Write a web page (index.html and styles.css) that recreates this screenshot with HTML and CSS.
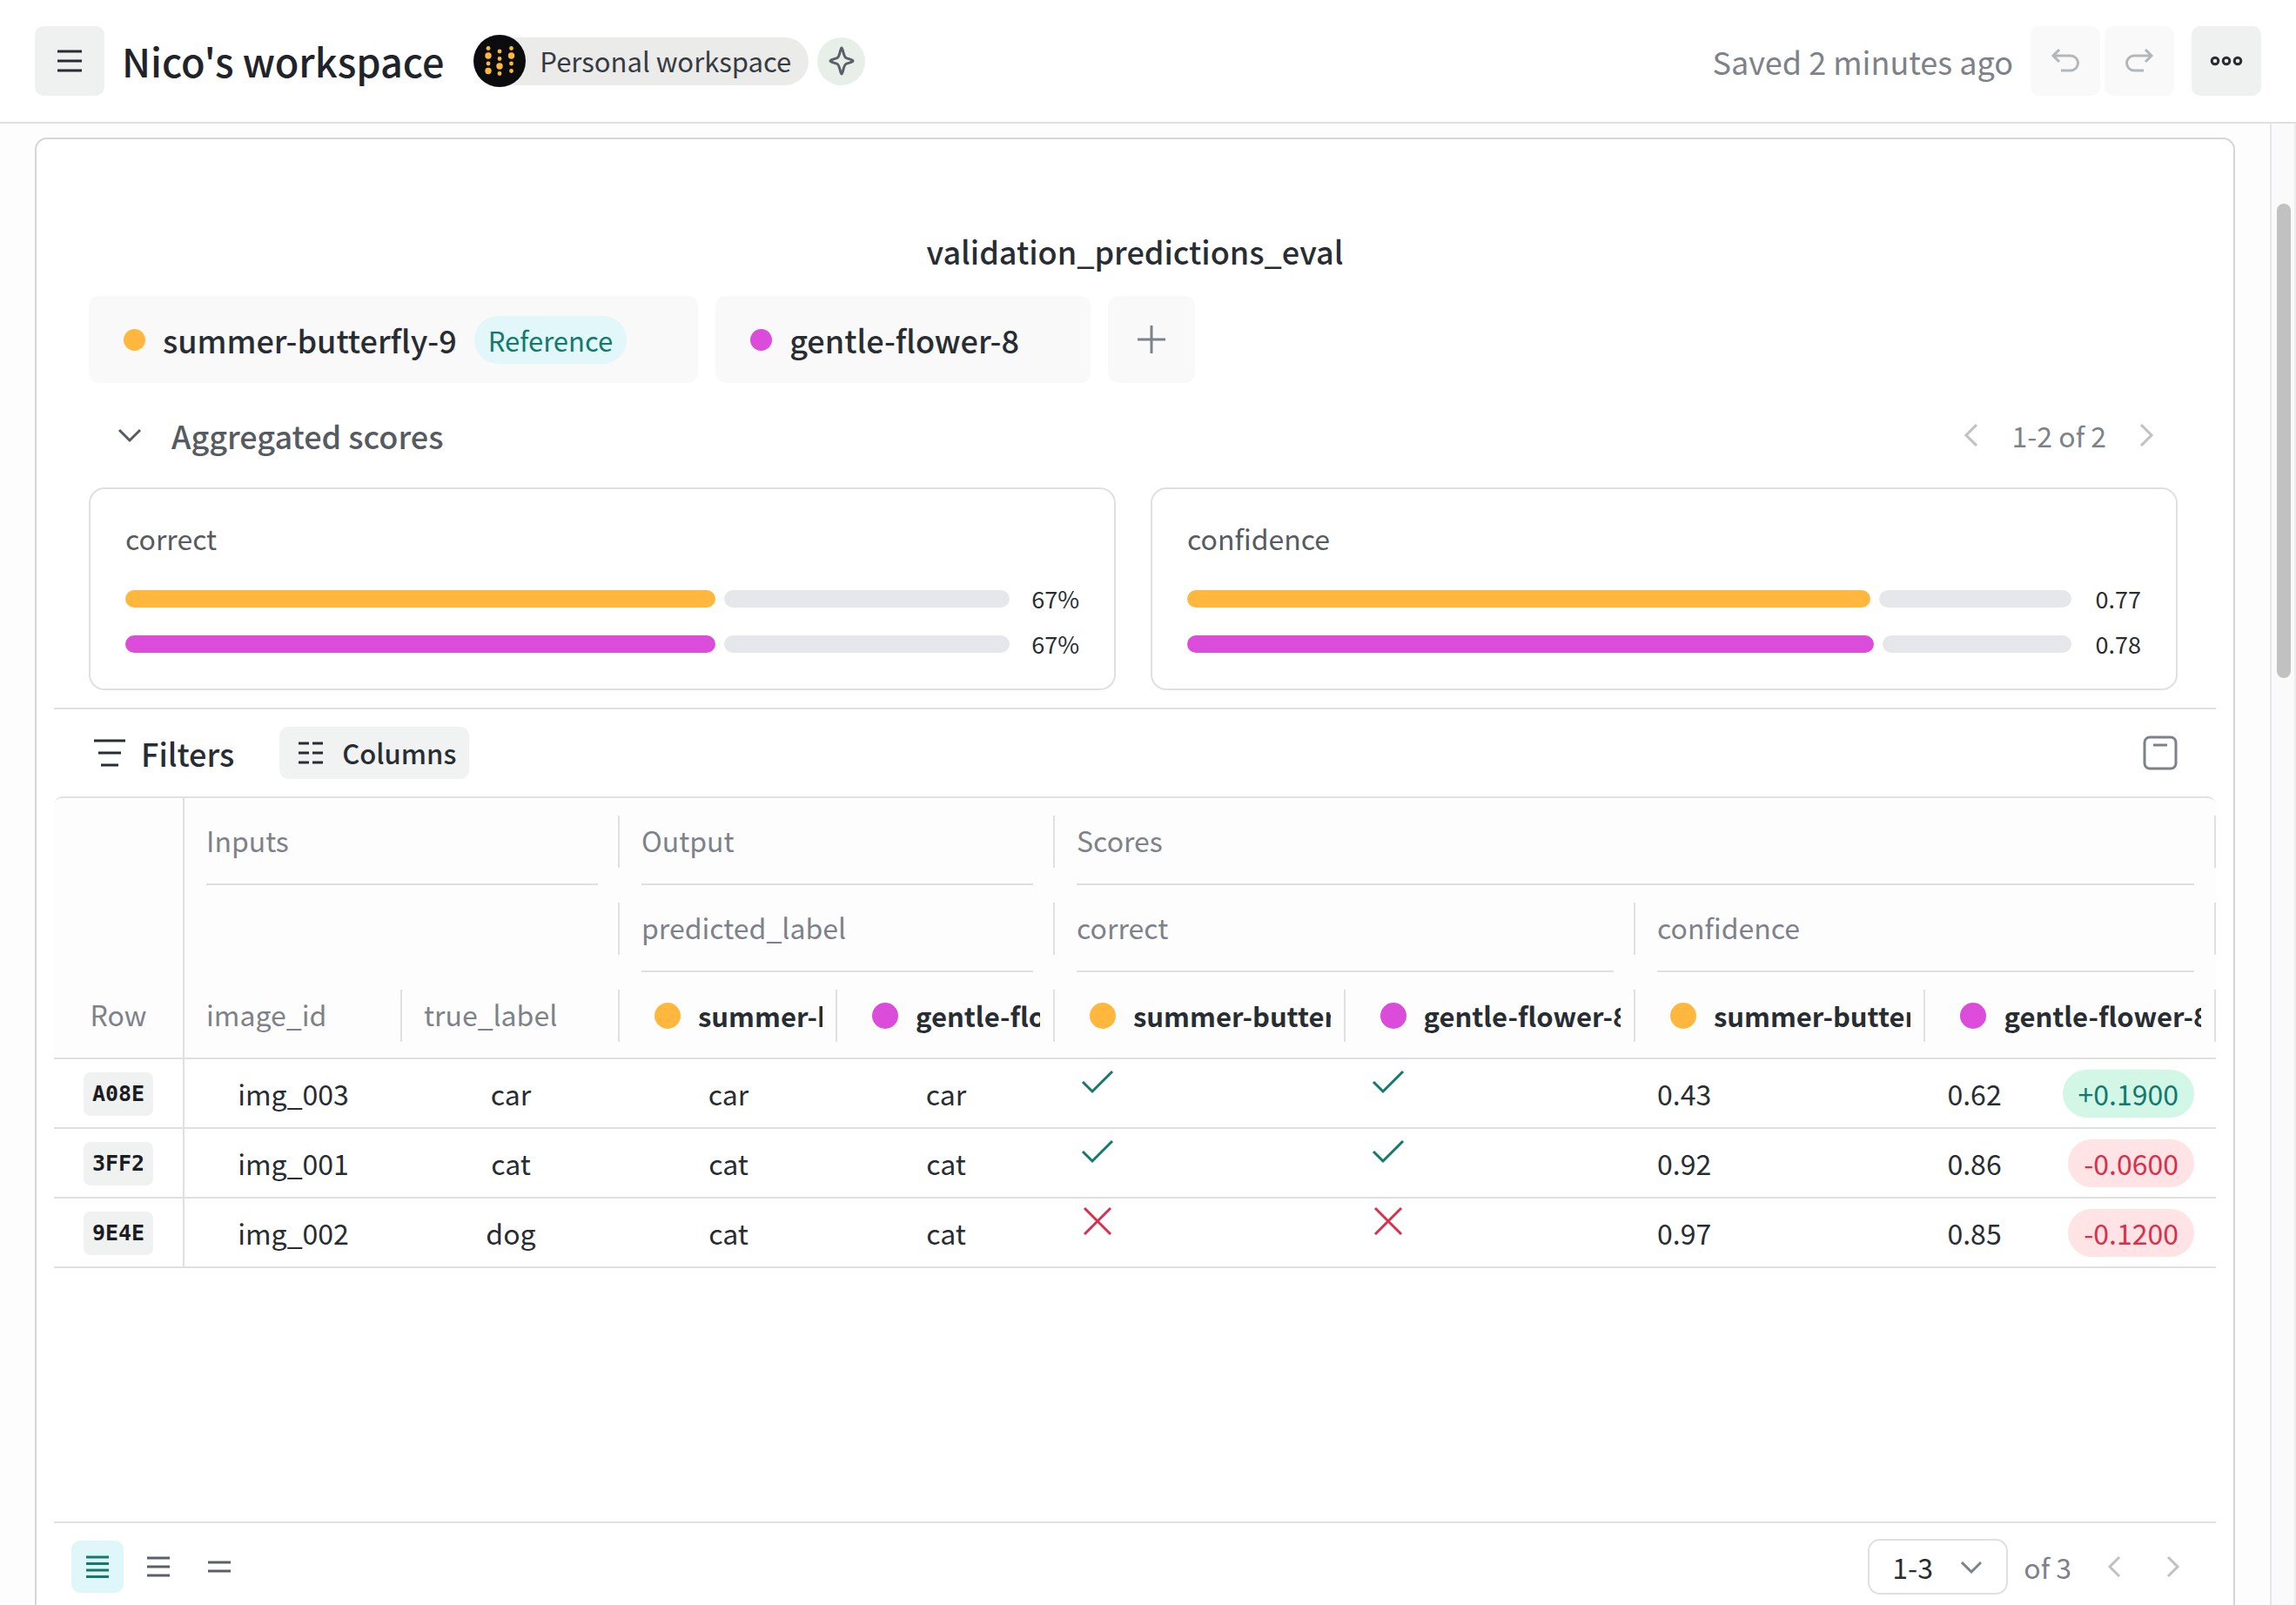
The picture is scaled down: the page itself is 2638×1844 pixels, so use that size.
FILE: index.html
```html
<!DOCTYPE html>
<html lang="en">

<head>
    <meta charset="UTF-8" />
    <meta name="viewport" content="width=device-width, initial-scale=1.0" />
    <title>Nico's workspace</title>
    <link rel="stylesheet" href="styles.css">
</head>

<body>
    <header class="topbar">
        <button class="icon-btn" aria-label="Menu">
            <svg width="40" height="40" viewBox="0 0 40 40"><path d="M6 9h28M6 20h28M6 31h28" /></svg>
        </button>
        <h1>Nico's workspace</h1>
        <a href="#" class="workspace-tag">
            <svg class="logo" width="60" height="60" viewBox="0 0 60 60">
                <circle cx="30" cy="30" r="30" fill="#0b0c0e" />
                <g fill="#ffb83d">
                    <circle cx="17" cy="15.500" r="2.400" /><circle cx="17" cy="24" r="3.700" /><circle cx="17" cy="33" r="2.400" /><circle cx="17" cy="41.500" r="3.700" />
                    <circle cx="30" cy="19" r="2.400" /><circle cx="30" cy="27.500" r="2.400" /><circle cx="30" cy="36" r="3.700" /><circle cx="30" cy="44.500" r="2.400" />
                    <circle cx="43.500" cy="15.500" r="2.400" /><circle cx="43.500" cy="24" r="3.700" /><circle cx="43.500" cy="33" r="2.400" /><circle cx="43.500" cy="41.500" r="2.400" />
                </g>
            </svg>
            <span>Personal workspace</span>
        </a>
        <button class="sparkle" aria-label="Assistant">
            <svg width="36" height="36" viewBox="0 0 36 36"><path d="M18 3C19.500 3 20 13 23 14.500C26 16 31 16.500 31 18C31 19.500 26 20 23 21.500C20 23 19.500 33 18 33C16.500 33 16 23 13 21.500C10 20 5 19.500 5 18C5 16.500 10 16 13 14.500C16 13 16.500 3 18 3Z" /></svg>
        </button>
        <span class="saved">Saved 2 minutes ago</span>
        <div class="history">
            <button class="icon-btn" aria-label="Undo" disabled>
                <svg width="40" height="40" viewBox="0 0 40 40"><path d="M13 7L6 14L13 21M6 14H26A8.500 8.500 0 0 1 26 31H15" /></svg>
            </button>
            <button class="icon-btn" aria-label="Redo" disabled>
                <svg width="40" height="40" viewBox="0 0 40 40"><path d="M27 7L34 14L27 21M34 14H14A8.500 8.500 0 0 0 14 31H25" /></svg>
            </button>
        </div>
        <button class="icon-btn" aria-label="More">
            <svg width="40" height="40" viewBox="0 0 40 40"><circle cx="7" cy="20" r="3.800" /><circle cx="20" cy="20" r="3.800" /><circle cx="33" cy="20" r="3.800" /></svg>
        </button>
    </header>

    <div class="page">
        <main class="workspace">
            <section class="panel">
                <h2>validation_predictions_eval</h2>

                <div class="runs">
                    <div class="run"><i class="dot gold"></i>summer-butterfly-9<span class="ref">Reference</span></div>
                    <div class="run"><i class="dot pink"></i>gentle-flower-8</div>
                    <button class="add" aria-label="Add run">
                        <svg width="40" height="40" viewBox="0 0 40 40"><path d="M20 4v32M4 20h32" /></svg>
                    </button>
                </div>

                <div class="scores-bar">
                    <button class="chev" aria-label="Collapse">
                        <svg width="40" height="40" viewBox="0 0 40 40"><path d="M8 14L20 26L32 14" /></svg>
                    </button>
                    <h3>Aggregated scores</h3>
                    <div class="pager">
                        <button class="chev" aria-label="Previous scores" disabled>
                            <svg width="40" height="40" viewBox="0 0 40 40"><path d="M26 8L14 20L26 32" /></svg>
                        </button>
                        <span>1-2 of 2</span>
                        <button class="chev" aria-label="Next scores" disabled>
                            <svg width="40" height="40" viewBox="0 0 40 40"><path d="M14 8L26 20L14 32" /></svg>
                        </button>
                    </div>
                </div>

                <div class="cards">
                    <div class="card">
                        <h4>correct</h4>
                        <div class="score">
                            <div class="bar"><div class="fill gold" style="width: 66.700%"></div><div class="rest"></div></div>
                            <span>67%</span>
                        </div>
                        <div class="score">
                            <div class="bar"><div class="fill pink" style="width: 66.700%"></div><div class="rest"></div></div>
                            <span>67%</span>
                        </div>
                    </div>
                    <div class="card">
                        <h4>confidence</h4>
                        <div class="score">
                            <div class="bar"><div class="fill gold" style="width: 77.300%"></div><div class="rest"></div></div>
                            <span>0.77</span>
                        </div>
                        <div class="score">
                            <div class="bar"><div class="fill pink" style="width: 77.700%"></div><div class="rest"></div></div>
                            <span>0.78</span>
                        </div>
                    </div>
                </div>

                <div class="toolbar">
                    <button class="filters">
                        <svg width="40" height="40" viewBox="0 0 40 40"><path d="M2 6h36M7 20h26M10 34h20" /></svg>
                        Filters
                    </button>
                    <button class="columns">
                        <svg width="32" height="32" viewBox="0 0 32 32"><path d="M2 5h12M18 5h12M2 16h12M18 16h12M2 27h12M18 27h12" /></svg>
                        Columns
                    </button>
                    <button class="row-size" aria-label="Row height">
                        <svg width="40" height="40" viewBox="0 0 40 40"><rect x="2" y="2" width="36" height="36" rx="6" /><path d="M12 11h16" /></svg>
                    </button>
                </div>

                <div class="table-wrap">
                    <table>
                        <colgroup>
                            <col class="c-row">
                            <col class="c-in" span="4">
                            <col span="4">
                        </colgroup>
                        <thead>
                            <tr>
                                <th rowspan="3" class="row-head">Row</th>
                                <th colspan="2" class="group"><div>Inputs</div></th>
                                <th colspan="2" class="group"><div>Output</div></th>
                                <th colspan="4" class="group"><div>Scores</div></th>
                            </tr>
                            <tr>
                                <th colspan="2"><div></div></th>
                                <th colspan="2" class="group"><div>predicted_label</div></th>
                                <th colspan="2" class="group"><div>correct</div></th>
                                <th colspan="2" class="group"><div>confidence</div></th>
                            </tr>
                            <tr>
                                <th><div>image_id</div></th>
                                <th><div>true_label</div></th>
                                <th><div class="run-head"><i class="dot gold"></i><span>summer-butterfly-9</span></div></th>
                                <th><div class="run-head"><i class="dot pink"></i><span>gentle-flower-8</span></div></th>
                                <th><div class="run-head"><i class="dot gold"></i><span>summer-butterfly-9</span></div></th>
                                <th><div class="run-head"><i class="dot pink"></i><span>gentle-flower-8</span></div></th>
                                <th><div class="run-head"><i class="dot gold"></i><span>summer-butterfly-9</span></div></th>
                                <th><div class="run-head"><i class="dot pink"></i><span>gentle-flower-8</span></div></th>
                            </tr>
                        </thead>
                        <tbody>
                            <tr>
                                <td class="id"><code>A08E</code></td>
                                <td>img_003</td>
                                <td>car</td>
                                <td>car</td>
                                <td>car</td>
                                <td class="mark"><svg class="yes" width="48" height="48" viewBox="0 0 48 48"><path d="M7 24L18 35L41 12" /></svg></td>
                                <td class="mark"><svg class="yes" width="48" height="48" viewBox="0 0 48 48"><path d="M7 24L18 35L41 12" /></svg></td>
                                <td class="num">0.43</td>
                                <td class="num"><div class="diff">0.62<span class="up">+0.1900</span></div></td>
                            </tr>
                            <tr>
                                <td class="id"><code>3FF2</code></td>
                                <td>img_001</td>
                                <td>cat</td>
                                <td>cat</td>
                                <td>cat</td>
                                <td class="mark"><svg class="yes" width="48" height="48" viewBox="0 0 48 48"><path d="M7 24L18 35L41 12" /></svg></td>
                                <td class="mark"><svg class="yes" width="48" height="48" viewBox="0 0 48 48"><path d="M7 24L18 35L41 12" /></svg></td>
                                <td class="num">0.92</td>
                                <td class="num"><div class="diff">0.86<span class="down">-0.0600</span></div></td>
                            </tr>
                            <tr>
                                <td class="id"><code>9E4E</code></td>
                                <td>img_002</td>
                                <td>dog</td>
                                <td>cat</td>
                                <td>cat</td>
                                <td class="mark"><svg class="no" width="48" height="48" viewBox="0 0 48 48"><path d="M9 9L39 39M39 9L9 39" /></svg></td>
                                <td class="mark"><svg class="no" width="48" height="48" viewBox="0 0 48 48"><path d="M9 9L39 39M39 9L9 39" /></svg></td>
                                <td class="num">0.97</td>
                                <td class="num"><div class="diff">0.85<span class="down">-0.1200</span></div></td>
                            </tr>
                        </tbody>
                    </table>
                </div>

                <footer class="table-footer">
                    <div class="density">
                        <button class="active" aria-label="Compact rows">
                            <svg width="40" height="40" viewBox="0 0 40 40"><path d="M7 9h26M7 16.500h26M7 24h26M7 31.500h26" /></svg>
                        </button>
                        <button aria-label="Medium rows">
                            <svg width="40" height="40" viewBox="0 0 40 40"><path d="M7 10h26M7 20h26M7 30h26" /></svg>
                        </button>
                        <button aria-label="Tall rows">
                            <svg width="40" height="40" viewBox="0 0 40 40"><path d="M7 15h26M7 25h26" /></svg>
                        </button>
                    </div>
                    <label class="range">
                        <select aria-label="Rows shown">
                            <option>1-3</option>
                        </select>
                        <svg width="40" height="40" viewBox="0 0 40 40"><path d="M9 15L20 26L31 15" /></svg>
                    </label>
                    <span class="total">of 3</span>
                    <button class="chev" aria-label="Previous page" disabled>
                        <svg width="40" height="40" viewBox="0 0 40 40"><path d="M25 9L14 20L25 31" /></svg>
                    </button>
                    <button class="chev" aria-label="Next page" disabled>
                        <svg width="40" height="40" viewBox="0 0 40 40"><path d="M15 9L26 20L15 31" /></svg>
                    </button>
                </footer>
            </section>
        </main>
        <div class="scrollbar"><div class="thumb"></div></div>
    </div>
</body>

</html>
```
FILE: styles.css
```css
* {
    box-sizing: border-box;
    margin: 0;
    padding: 0;
}

body {
    font-family: 'Noto Sans CJK SC', 'Noto Sans', sans-serif;
    font-size: 32px;
    line-height: 40px;
    color: #282d33;
    background: #fff;
    height: 100vh;
    display: flex;
    flex-direction: column;
    overflow: hidden;
}

button,
select {
    font: inherit;
    color: inherit;
    background: none;
    border: none;
    cursor: pointer;
}

svg {
    display: block;
    flex: none;
    fill: none;
    stroke: currentColor;
    stroke-width: 3;
}

h1,
h2,
h3 {
    font-weight: 500;
}

/* Top bar */
.topbar {
    flex: none;
    height: 142px;
    padding: 0 40px;
    display: flex;
    align-items: center;
    border-bottom: 2px solid #dfe0e1;
}

.icon-btn {
    width: 80px;
    height: 80px;
    display: flex;
    align-items: center;
    justify-content: center;
    border-radius: 10px;
    background: #eff0f0;
}

.icon-btn:disabled {
    background: #f9f9f9;
    color: #b4b7ba;
}

h1 {
    margin: 0 34px 0 20px;
    font-size: 45px;
    line-height: 60px;
    color: #1f242a;
}

.workspace-tag {
    display: flex;
    align-items: center;
    height: 55px;
    padding-right: 20px;
    gap: 16px;
    border-radius: 28px;
    background: #ebebea;
    color: #363b42;
    font-size: 31px;
    text-decoration: none;
}

.logo {
    stroke: none;
}

.sparkle {
    width: 55px;
    height: 55px;
    margin-left: 10px;
    display: flex;
    align-items: center;
    justify-content: center;
    border-radius: 50%;
    background: #e8efe9;
    color: #5b6068;
}

.saved {
    margin-left: auto;
    font-size: 36px;
    color: #7d828a;
}

.history {
    display: flex;
    gap: 5px;
    margin: 0 20px;
}

/* Page and scrollbar */
.page {
    flex: 1;
    min-height: 0;
    display: flex;
}

.workspace {
    flex: 1;
    min-width: 0;
    padding: 16px 40px 0;
    background: #fdfdfd;
    display: flex;
}

.scrollbar {
    width: 30px;
    padding: 92px 4px 0 6px;
    border-left: 2px solid #e6e6ea;
    border-right: 2px solid #ededed;
    background: #fafafa;
}

.thumb {
    width: 16px;
    height: 545px;
    border-radius: 8px;
    background: #c1c1c1;
}

/* Panel */
.panel {
    flex: 1;
    min-width: 0;
    padding: 108px 20px 0;
    border: 2px solid #d5d6db;
    border-bottom: none;
    border-radius: 14px 14px 0 0;
    background: #fff;
    display: flex;
    flex-direction: column;
}

h2 {
    font-size: 36px;
    line-height: 40px;
    text-align: center;
}

.runs {
    display: flex;
    gap: 20px;
    margin: 32px 40px 0;
}

.run {
    height: 100px;
    padding: 0 82px 0 40px;
    display: flex;
    align-items: center;
    gap: 20px;
    border-radius: 12px;
    background: #f9f9f9;
    font-size: 36px;
    font-weight: 500;
}

.dot {
    flex: none;
    width: 25px;
    height: 25px;
    border-radius: 50%;
}

.gold {
    background: #ffb83d;
}

.pink {
    background: #db4cdb;
}

.ref {
    padding: 0 16px;
    border-radius: 28px;
    font-size: 31px;
    font-weight: 400;
    line-height: 55px;
    background: #e1f7fa;
    color: #12796e;
}

.add {
    width: 100px;
    border-radius: 12px;
    background: #f9f9f9;
    color: #7d828a;
    display: flex;
    align-items: center;
    justify-content: center;
}

.scores-bar {
    display: flex;
    align-items: center;
    height: 120px;
    padding: 0 60px 0 67px;
    color: #565a61;
}

h3 {
    margin-left: 28px;
    font-size: 36px;
}

.chev {
    flex: none;
    width: 40px;
}

.chev:disabled {
    color: #bfc1c4;
}

.pager {
    margin-left: auto;
    display: flex;
    align-items: center;
    gap: 26px;
    color: #7d828a;
}

.cards {
    display: grid;
    grid-template-columns: 1fr 1fr;
    gap: 40px;
    margin: 0 44px 20px 40px;
}

.card {
    padding: 36px 40px 25px;
    border: 2px solid #dfe0e1;
    border-radius: 18px;
}

h4 {
    margin-bottom: 24px;
    font-size: 32px;
    font-weight: 400;
    color: #565a61;
}

.score {
    display: flex;
    align-items: center;
    height: 52px;
    font-size: 27px;
}

.bar {
    flex: 1;
    display: flex;
    gap: 10px;
    height: 20px;
}

.fill,
.rest {
    border-radius: 10px;
}

.rest {
    flex: 1;
    background: #e6e7ea;
}

.score span {
    width: 80px;
    text-align: right;
}

/* Toolbar over the table */
.toolbar {
    display: flex;
    align-items: center;
    height: 102px;
    padding: 0 44px;
    border-top: 2px solid #dfe0e1;
    font-weight: 500;
}

.filters {
    display: flex;
    align-items: center;
    gap: 16px;
    font-size: 36px;
}

.columns {
    display: flex;
    align-items: center;
    gap: 20px;
    height: 60px;
    margin-left: 52px;
    padding: 0 15px 0 20px;
    border-radius: 10px;
    background: #f1f2f2;
    font-size: 31px;
}

.row-size {
    margin-left: auto;
    color: #7d828a;
}

/* Table */
.table-wrap {
    flex: 1;
    border-top: 2px solid #dfe0e1;
    border-radius: 10px 10px 0 0;
    overflow: hidden;
}

table {
    width: 100%;
    table-layout: fixed;
    border-spacing: 0;
}

.c-row {
    width: 150px;
}

.c-in {
    width: 250px;
}

thead {
    background: #fdfdfd;
    color: #7d828a;
}

th {
    height: 100px;
    padding: 20px 0 18px;
    font-weight: 400;
    text-align: left;
    vertical-align: top;
}

th > div {
    height: 60px;
    padding: 8px 0 12px 25px;
    border-right: 2px solid #dfe0e1;
}

.group {
    padding-bottom: 0;
}

.group::after {
    content: '';
    display: block;
    height: 2px;
    margin: 18px 25px 0;
    background: #dfe0e1;
}

.row-head {
    padding-bottom: 30px;
    border-right: 2px solid #dfe0e1;
    text-align: center;
    vertical-align: bottom;
}

thead tr:last-child th,
.row-head,
td {
    border-bottom: 2px solid #dfe0e1;
}

.run-head {
    display: flex;
    align-items: center;
    gap: 20px;
    padding: 0 15px 0 40px;
    font-size: 31px;
    font-weight: 600;
    color: #282d33;
}

.run-head .dot {
    width: 30px;
    height: 30px;
}

.run-head span {
    overflow: hidden;
    white-space: nowrap;
}

td {
    height: 80px;
    text-align: center;
}

.id {
    border-right: 2px solid #dfe0e1;
}

code {
    display: inline-block;
    padding: 0 10px;
    border-radius: 8px;
    background: #f0f1f1;
    font: bold 25px/50px 'DejaVu Sans Mono', monospace;
    color: #1a1d21;
}

.mark {
    padding: 2px 25px 0;
    vertical-align: top;
}

.yes {
    color: #12796e;
}

.no {
    color: #da2f4c;
}

.num {
    padding: 0 25px;
    text-align: left;
}

.diff {
    display: flex;
    align-items: center;
    justify-content: space-between;
}

.up,
.down {
    padding: 0 18px;
    border-radius: 28px;
    line-height: 55px;
}

.up {
    background: #d3f7e6;
    color: #12796e;
}

.down {
    background: #ffe3e5;
    color: #da2f4c;
}

/* Table footer */
.table-footer {
    display: flex;
    align-items: center;
    height: 96px;
    padding: 6px 30px 0 20px;
    border-top: 2px solid #dfe0e1;
    color: #7d828a;
}

.density {
    display: flex;
    gap: 10px;
    color: #5b6068;
}

.density button {
    width: 60px;
    height: 60px;
    padding: 10px;
    border-radius: 10px;
}

.density .active {
    background: #dff7f9;
    color: #12796e;
}

.range {
    display: grid;
    align-items: center;
    margin-left: auto;
}

.range select,
.range svg {
    grid-area: 1 / 1;
}

.range select {
    width: 161px;
    height: 64px;
    padding-left: 26px;
    border: 2px solid #dfe0e1;
    border-radius: 14px;
    appearance: none;
    color: #282d33;
}

.range svg {
    justify-self: end;
    margin-right: 22px;
    pointer-events: none;
}

.total {
    margin: 0 30px 0 18px;
}

.total + .chev {
    margin-right: 26px;
}
```
